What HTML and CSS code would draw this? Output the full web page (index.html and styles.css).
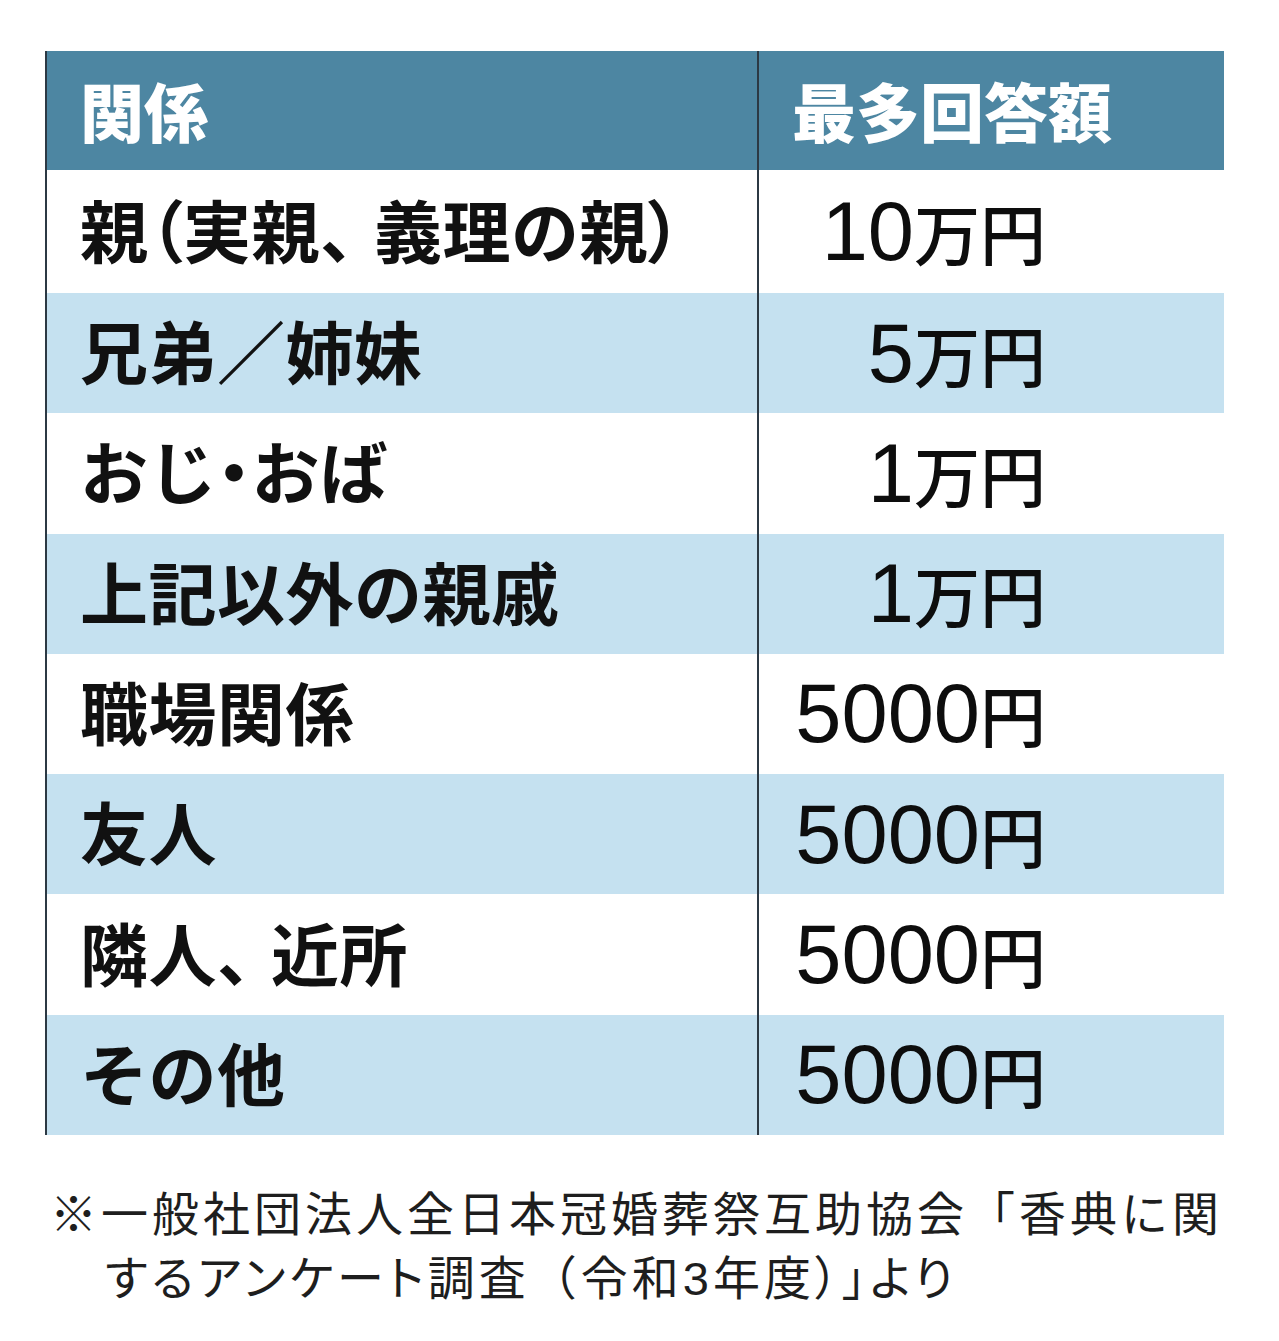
FILE: index.html
```html
<!DOCTYPE html>
<html lang="ja">
<head>
<meta charset="utf-8">
<title>香典の最多回答額</title>
<link rel="stylesheet" href="styles.css">
</head>
<body>
<div class="page">
  <div class="table">
    <div class="cell head label">関係</div>
    <div class="cell head value-head">最多回答額</div>

    <div class="cell label">親<span class="narrow">（</span>実親<span class="comma">、</span>義理の親<span class="narrow">）</span></div>
    <div class="cell value"><span class="amount"><span class="num">10</span>万円</span></div>

    <div class="cell label alt">兄弟／姉妹</div>
    <div class="cell value alt"><span class="amount"><span class="num">5</span>万円</span></div>

    <div class="cell label">おじ<span class="narrow">・</span>おば</div>
    <div class="cell value"><span class="amount"><span class="num">1</span>万円</span></div>

    <div class="cell label alt">上記以外の親戚</div>
    <div class="cell value alt"><span class="amount"><span class="num">1</span>万円</span></div>

    <div class="cell label">職場関係</div>
    <div class="cell value"><span class="amount"><span class="num">5000</span>円</span></div>

    <div class="cell label alt">友人</div>
    <div class="cell value alt"><span class="amount"><span class="num">5000</span>円</span></div>

    <div class="cell label">隣人<span class="comma">、</span>近所</div>
    <div class="cell value"><span class="amount"><span class="num">5000</span>円</span></div>

    <div class="cell label alt">その他</div>
    <div class="cell value alt"><span class="amount"><span class="num">5000</span>円</span></div>
  </div>
  <p class="note">※一般社団法人全日本冠婚葬祭互助協会「香典に関<br><span class="kana">するアンケート</span>調査（令和<span class="digit">3</span>年度<span class="kana">）」より</span></p>
</div>
</body>
</html>
```

FILE: styles.css
```css
html, body {
  margin: 0;
  padding: 0;
  background: #ffffff;
}

.page {
  padding: 51px 0 0 45px;
  font-family: "Noto Sans CJK JP", "Noto Sans", sans-serif;
}

.table {
  width: 1179px;
  display: grid;
  grid-template-columns: 710px 467px;
  grid-template-rows: 119px 123px repeat(7, 120.29px);
  border-left: 2px solid #2c3944;
}

.cell {
  display: flex;
  align-items: center;
  color: #111111;
  background: #ffffff;
}

.cell.alt {
  background: #c5e1f0;
}

.cell.head {
  background: #4d86a2;
  color: #ffffff;
  font-size: 64px;
  font-weight: 900;
  line-height: 1;
  padding-bottom: 4px;
  box-sizing: border-box;
}

.label {
  padding-left: 33px;
  padding-bottom: 6px;
  box-sizing: border-box;
  font-size: 68px;
  font-weight: 700;
  line-height: 1;
  letter-spacing: 0.5px;
  white-space: nowrap;
}

.cell.head.label {
  font-size: 64px;
  font-weight: 900;
  letter-spacing: 0;
}

.narrow {
  font-feature-settings: "palt";
}

.comma {
  letter-spacing: -14px;
}

.value,
.value-head {
  border-left: 2px solid #2c3944;
}

.value-head {
  padding-left: 33px;
}

.value {
  justify-content: flex-end;
  padding-right: 178px;
  box-sizing: border-box;
}

.amount {
  display: block;
  font-size: 66px;
  font-weight: 500;
  line-height: 1;
  white-space: nowrap;
  color: #0d0d0d;
}

.num {
  font-family: "Liberation Sans", Arial, sans-serif;
  font-size: 83px;
  font-weight: 400;
}

.note {
  margin: 44px 0 0 5px;
  padding-left: 55px;
  text-indent: -55px;
  font-size: 47px;
  font-weight: 400;
  line-height: 64px;
  letter-spacing: 4px;
  color: #1e1e1e;
  white-space: nowrap;
}

.note .kana {
  font-feature-settings: "palt";
}

.note .digit {
  font-family: "Liberation Sans", Arial, sans-serif;
}
```
